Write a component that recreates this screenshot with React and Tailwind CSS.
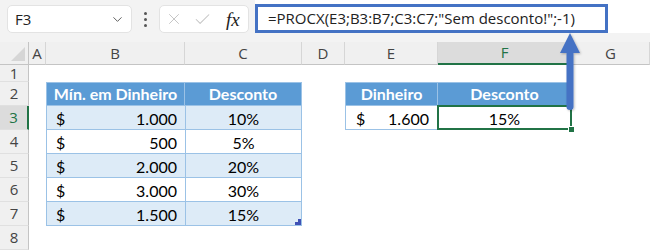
import { ChevronDown, X, Check } from "lucide-react";

const ui = { fontFamily: '"Open Sans", "Noto Sans", sans-serif' };
const cellFont = { fontFamily: 'Lato, "Liberation Sans", sans-serif' };

const COLS = ["A", "B", "C", "D", "E", "F", "G"];

const table1 = [
  ["1.000", "10%"],
  ["500", "5%"],
  ["2.000", "20%"],
  ["3.000", "30%"],
  ["1.500", "15%"],
];

const TopBar = () => (
  <div className="h-[42px] bg-[#f3f3f3] flex items-start pt-[5px] pl-[7px]" style={ui}>
    <div className="w-[125px] h-[28px] bg-white rounded-[5px] border border-[#e3e3e3] flex items-center justify-between pl-[7px] pr-[6px]">
      <span className="text-[15px] text-[#222]">F3</span>
      <ChevronDown size={15} strokeWidth={1.5} className="text-[#555]" />
    </div>
    <div className="w-[27px] h-[28px] flex flex-col items-center justify-center gap-[3px]">
      <span className="w-[3px] h-[3px] bg-[#555] rounded-full" />
      <span className="w-[3px] h-[3px] bg-[#555] rounded-full" />
      <span className="w-[3px] h-[3px] bg-[#555] rounded-full" />
    </div>
    <div className="w-[90px] h-[28px] bg-white rounded-[5px] border border-[#e3e3e3] flex items-center pl-[5px] gap-[10px]">
      <X size={18} strokeWidth={1.3} className="text-[#c4c4c4]" />
      <Check size={19} strokeWidth={1.3} className="text-[#c4c4c4]" />
      <span
        className="text-[19px] italic text-[#222] leading-none ml-[4px]"
        style={{ fontFamily: '"Liberation Serif", "DejaVu Serif", serif' }}
      >
        fx
      </span>
    </div>
    <div className="ml-[6px] -mt-[5px] flex-1 h-[33px] bg-white pt-[4px]">
      <div className="w-[353px] h-[29px] border-[3px] border-[#4472c4] flex items-center pl-[10px] text-[15px] text-[#222] whitespace-nowrap">
        =PROCX(E3;B3:B7;C3:C7;"Sem desconto!";-1)
      </div>
    </div>
  </div>
);

const ColHeader = ({ label, active }) => (
  <div
    className={`flex items-center justify-center border-r border-[#d6d6d6] text-[15px] ${
      active
        ? "bg-[#dcdcdc] text-[#217346] border-b-2 border-b-[#217346]"
        : "bg-[#f0f0f0] text-[#444] border-b border-b-[#c4c4c4]"
    }`}
    style={ui}
  >
    {label}
  </div>
);

const RowHeader = ({ n, active }) => (
  <div
    className={`flex items-center justify-center border-b border-[#e0e0e0] text-[15px] ${
      active
        ? "bg-[#dcdcdc] text-[#217346] border-r-2 border-r-[#217346]"
        : "bg-[#f0f0f0] text-[#444] border-r border-r-[#c4c4c4]"
    }`}
    style={ui}
  >
    {n}
  </div>
);

const Empty = () => <div className="bg-white" />;

const Head = ({ children, first }) => (
  <div
    className={`bg-[#5b9bd5] text-white font-bold text-[16px] flex items-center justify-center border-t border-b border-r border-[#9bc2e6] ${
      first ? "border-l" : ""
    }`}
    style={cellFont}
  >
    {children}
  </div>
);

const Money = ({ value, band, padL = "pl-[9px]", padR = "pr-[8px]" }) => (
  <div
    className={`${band ? "bg-[#ddebf7]" : "bg-white"} border-l border-b border-[#9bc2e6] flex items-center justify-between ${padL} ${padR} text-[16px] text-black pt-[2px]`}
    style={cellFont}
  >
    <span>$</span>
    <span>{value}</span>
  </div>
);

const Pct = ({ value, band, last }) => (
  <div
    className={`relative ${band ? "bg-[#ddebf7]" : "bg-white"} border-l border-r border-b border-[#9bc2e6] flex items-center justify-center text-[16px] text-black pt-[2px]`}
    style={cellFont}
  >
    {value}
    {last && (
      <svg className="absolute right-0 bottom-0" width="6" height="6" viewBox="0 0 6 6">
        <path d="M6 0 V6 H0 V3 H3 V0 Z" fill="#3f51b5" />
      </svg>
    )}
  </div>
);

const Arrow = () => (
  <svg
    className="absolute left-[556px] top-[30px]"
    width="28"
    height="84"
    viewBox="0 0 28 84"
  >
    <defs>
      <filter id="sh" x="-50%" y="-10%" width="200%" height="130%">
        <feDropShadow dx="1" dy="1" stdDeviation="1" floodColor="#000" floodOpacity="0.25" />
      </filter>
    </defs>
    <g filter="url(#sh)">
      <path d="M14 3 L24 23 L17.5 23 L17.5 77 Q17.5 80 14 80 Q10.5 80 10.5 77 L10.5 23 L4 23 Z" fill="#4472c4" />
    </g>
  </svg>
);

export default function App() {
  const rows = [];
  for (let r = 1; r <= 8; r++) {
    const cells = [<RowHeader key={`h${r}`} n={r} active={r === 3} />];
    cells.push(<Empty key={`a${r}`} />);
    // B, C
    if (r === 2) {
      cells.push(<Head key={`b${r}`} first>Mín. em Dinheiro</Head>);
      cells.push(<Head key={`c${r}`}>Desconto</Head>);
    } else if (r >= 3 && r <= 7) {
      const [v, p] = table1[r - 3];
      const band = r % 2 === 1;
      cells.push(<Money key={`b${r}`} value={v} band={band} />);
      cells.push(<Pct key={`c${r}`} value={p} band={band} last={r === 7} />);
    } else {
      cells.push(<Empty key={`b${r}`} />, <Empty key={`c${r}`} />);
    }
    cells.push(<Empty key={`d${r}`} />);
    // E, F
    if (r === 2) {
      cells.push(<Head key={`e${r}`} first>Dinheiro</Head>);
      cells.push(<Head key={`f${r}`}>Desconto</Head>);
    } else if (r === 3) {
      cells.push(<Money key={`e${r}`} value="1.600" padL="pl-[10px]" padR="pr-[9px]" />);
      cells.push(
        <div
          key={`f${r}`}
          className="relative bg-white border-r border-b border-[#9bc2e6] flex items-center justify-center text-[16px] text-black pt-[2px]"
          style={cellFont}
        >
          15%
          <span className="absolute -left-[1px] -top-[1px] -right-[1px] -bottom-[1px] border-2 border-[#217346]" />
          <span className="absolute -right-[4px] -bottom-[4px] w-[7px] h-[7px] bg-[#217346] border border-white" />
        </div>
      );
    } else {
      cells.push(<Empty key={`e${r}`} />, <Empty key={`f${r}`} />);
    }
    cells.push(<Empty key={`g${r}`} />);
    rows.push(...cells);
  }

  return (
    <div className="relative w-[650px] h-[250px] overflow-hidden bg-white">
      <TopBar />
      <div className="grid grid-cols-[29px_17px_139px_117px_43px_93px_134px_78px] grid-rows-[23px_17px_repeat(7,24px)]">
        <div className="bg-[#f0f0f0] border-r border-b border-[#c4c4c4] relative">
          <svg className="absolute right-[3px] bottom-[3px]" width="14" height="14" viewBox="0 0 14 14">
            <path d="M14 0 V14 H0 Z" fill="#d6d6d6" />
          </svg>
        </div>
        {COLS.map((c) => (
          <ColHeader key={c} label={c} active={c === "F"} />
        ))}
        {rows}
      </div>
      <Arrow />
    </div>
  );
}
